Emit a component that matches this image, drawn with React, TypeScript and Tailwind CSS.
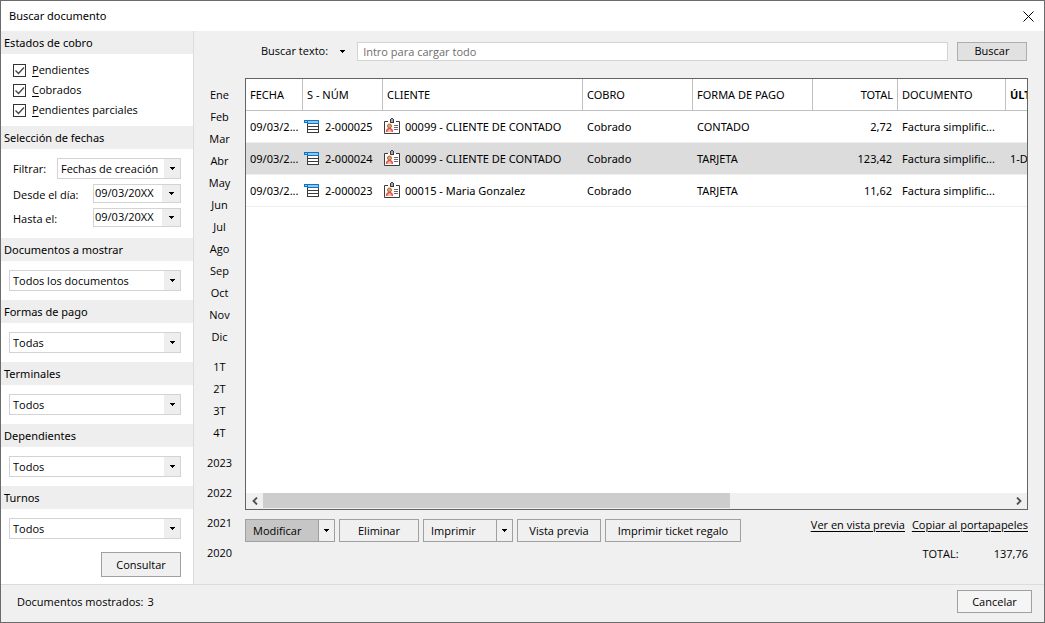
import React, { useState } from 'react';
import clsx from 'clsx';

const MONTHS = ['Ene', 'Feb', 'Mar', 'Abr', 'May', 'Jun', 'Jul', 'Ago', 'Sep', 'Oct', 'Nov', 'Dic'];
const QUARTERS = ['1T', '2T', '3T', '4T'];
const YEARS = ['2023', '2022', '2021', '2020'];

const documents = [
  { date: '09/03/2...', num: '2-000025', client: '00099 - CLIENTE DE CONTADO', status: 'Cobrado', payment: 'CONTADO', total: '2,72', type: 'Factura simplific...', last: '' },
  { date: '09/03/2...', num: '2-000024', client: '00099 - CLIENTE DE CONTADO', status: 'Cobrado', payment: 'TARJETA', total: '123,42', type: 'Factura simplific...', last: '1-D' },
  { date: '09/03/2...', num: '2-000023', client: '00015 - Maria Gonzalez', status: 'Cobrado', payment: 'TARJETA', total: '11,62', type: 'Factura simplific...', last: '' },
];

const filters = [
  { id: 'documentos', title: 'Documentos a mostrar', value: 'Todos los documentos' },
  { id: 'formas', title: 'Formas de pago', value: 'Todas' },
  { id: 'terminales', title: 'Terminales', value: 'Todos' },
  { id: 'dependientes', title: 'Dependientes', value: 'Todos' },
  { id: 'turnos', title: 'Turnos', value: 'Todos' },
];

const Caret = () => (
  <svg width="5" height="3" viewBox="0 0 5 3" shapeRendering="crispEdges" aria-hidden="true">
    <path d="M0 0h5v1H0zM1 1h3v1H1zM2 2h1v1H2z" fill="#000" />
  </svg>
);

const DocIcon = () => (
  <svg width="16" height="16" viewBox="0 0 16 16" className="shrink-0" shapeRendering="crispEdges" aria-hidden="true">
    <path d="M3 5h12v9H3z" fill="#3b3b3b" />
    <path d="M4 5h10v2H4zM4 8h10v2H4zM4 11h10v2H4z" fill="#fff" />
    <path d="M0 1h15v4H3V4H0z" fill="#1173c0" />
    <path d="M1 2h2v1H1zM4 2h10v2H4z" fill="#8cc8f2" />
  </svg>
);

const ClientIcon = () => (
  <svg width="16" height="18" viewBox="0 0 16 18" className="shrink-0" aria-hidden="true">
    <path d="M.5 3.5h15v12H.5z" fill="#fff" stroke="#3b3b3b" />
    <path d="M4 3h8v1H4z" fill="#fff" />
    <path d="M6 1h1V0h2v1h1v4H6z" fill="#3b3b3b" />
    <path d="M7 1h2v3H7z" fill="#a8a8a8" />
    <path d="M2 14v-2l2-2h3l2 2v2z" fill="#e8504a" />
    <path d="M3.5 14v-1.5L5.5 11l2 1.5V14z" fill="#f9b4b0" />
    <circle cx="5.5" cy="8" r="2" fill="#dba578" stroke="#b5652a" />
    <path d="M10 7.5h4M10 9.5h4M10 11.5h4" stroke="#6a6a6a" />
  </svg>
);

const SectionTitle = ({ children }: { children: React.ReactNode }) => (
  <h2 className="flex h-[23px] items-center bg-[#eeeeee] px-[3px] pt-px font-['Noto_Sans','Open_Sans',sans-serif]">{children}</h2>
);

const Check = ({ label }: { label: string }) => (
  <label className="flex h-5 items-center gap-1.5">
    <span className="grid size-[13px]">
      <input type="checkbox" defaultChecked className="peer col-start-1 row-start-1 size-[13px] appearance-none border border-[#333333] bg-white" />
      <svg viewBox="0 0 13 13" className="pointer-events-none invisible col-start-1 row-start-1 size-[13px] peer-checked:visible">
        <path d="M2.5 6.5l3 3 5.5-6" fill="none" stroke="#444" strokeWidth="1.3" />
      </svg>
    </span>
    <span>
      <span className="underline underline-offset-2">{label[0]}</span>
      {label.slice(1)}
    </span>
  </label>
);

const Select = ({ id, value, label, className }: { id: string; value: string; label?: string; className?: string }) => (
  <div className={clsx('relative h-[21px] border border-[#d3d3d3] bg-white', className)}>
    <select id={id} aria-label={label} className="block h-full w-full appearance-none pt-px pr-4 pl-[3px] outline-none">
      <option>{value}</option>
    </select>
    <span className="pointer-events-none absolute inset-y-0 right-0 flex w-4 items-center justify-center bg-[#eeeeee]">
      <Caret />
    </span>
  </div>
);

const DateField = ({ id, label }: { id: string; label: string }) => (
  <div className="flex h-6 items-start justify-between">
    <label htmlFor={id} className="pt-[3px] leading-4">{label}</label>
    <div className="flex h-[19px] w-[88px] border border-[#d3d3d3] bg-white">
      <input id={id} defaultValue="09/03/20XX" className="min-w-0 flex-1 pb-px pl-px outline-none" />
      <button aria-label={'Abrir calendario: ' + label} className="flex w-[18px] items-center justify-center bg-[#eeeeee]">
        <Caret />
      </button>
    </div>
  </div>
);

const ActionButton = ({ children, className }: { children: React.ReactNode; className?: string }) => (
  <button className={clsx('h-[23px] border border-[#a0a0a0] bg-[#f0f0f0]', className)}>{children}</button>
);

const SplitButton = ({ label, active }: { label: string; active?: boolean }) => (
  <div className="flex h-[23px] w-[90px] border border-[#a0a0a0]">
    <button className={clsx('flex-1 border-r border-[#a0a0a0] pl-[7px] text-left', active && 'bg-[#c6c6c6]')}>{label}</button>
    <button aria-label={'Opciones de ' + label} className="flex w-[15px] items-center justify-center">
      <Caret />
    </button>
  </div>
);

const Sidebar = () => (
  <aside className="w-[193px] shrink-0 border-r border-[#dcdcdc] bg-white">
    <SectionTitle>Estados de cobro</SectionTitle>
    <div className="h-[72px] px-3 pt-[6px]">
      <Check label="Pendientes" />
      <Check label="Cobrados" />
      <Check label="Pendientes parciales" />
    </div>
    <SectionTitle>Selección de fechas</SectionTitle>
    <div className="h-[89px] px-3 pt-[9px]">
      <div className="flex h-[26px] items-start justify-between">
        <label htmlFor="filtrar" className="pt-[3px] leading-4">Filtrar:</label>
        <Select id="filtrar" value="Fechas de creación" className="w-[124px]" />
      </div>
      <DateField id="desde" label="Desde el día:" />
      <DateField id="hasta" label="Hasta el:" />
    </div>
    {filters.map((f) => (
      <section key={f.id}>
        <SectionTitle>{f.title}</SectionTitle>
        <div className="py-[9px] pr-3 pl-2">
          <Select id={f.id} value={f.value} label={f.title} />
        </div>
      </section>
    ))}
    <div className="flex justify-end px-3 pt-1 pb-[7px]">
      <button className="h-[25px] w-20 border border-[#a0a0a0] bg-[#f0f0f0]">Consultar</button>
    </div>
  </aside>
);

const Periods = () => (
  <nav className="flex w-[51px] shrink-0 flex-col pt-[53px]">
    {MONTHS.map((m) => (
      <button key={m} className="h-[22px]">{m}</button>
    ))}
    <div className="mt-2 flex flex-col">
      {QUARTERS.map((q) => (
        <button key={q} className="h-[22px]">{q}</button>
      ))}
    </div>
    <div className="mt-1 flex flex-col">
      {YEARS.map((y) => (
        <button key={y} className="h-[30px]">{y}</button>
      ))}
    </div>
  </nav>
);

const Scrollbar = () => (
  <div className="flex h-4 items-center bg-[#f0f0f0]">
    <button aria-label="Desplazar a la izquierda" className="flex w-[17px] justify-center">
      <svg width="6" height="8" viewBox="0 0 6 8"><path d="M5 .5L1.5 4 5 7.5" fill="none" stroke="#505050" strokeWidth="1.8" /></svg>
    </button>
    <div className="h-full flex-1">
      <div className="h-[15px] w-[62.5%] bg-[#cdcdcd]" />
    </div>
    <button aria-label="Desplazar a la derecha" className="flex w-[17px] justify-center">
      <svg width="6" height="8" viewBox="0 0 6 8"><path d="M1 .5L4.5 4 1 7.5" fill="none" stroke="#505050" strokeWidth="1.8" /></svg>
    </button>
  </div>
);

const Results = () => {
  const [selected, setSelected] = useState(1);
  const th = 'border-r border-b border-[#c0c0c0] px-1 text-left font-normal whitespace-nowrap';
  const td = 'border-b border-[#eeeeee] px-1 whitespace-nowrap';

  return (
    <div className="flex flex-1 flex-col border border-[#646464] bg-white">
      <div className="flex-1 overflow-hidden">
        <table className="w-[1250px] table-fixed border-separate border-spacing-0 font-['Noto_Sans','Open_Sans',sans-serif]">
          <colgroup>
            <col className="w-[57px]" />
            <col className="w-[80px]" />
            <col className="w-[200px]" />
            <col className="w-[110px]" />
            <col className="w-[120px]" />
            <col className="w-[85px]" />
            <col className="w-[108px]" />
            <col />
          </colgroup>
          <thead>
            <tr className="h-8">
              <th className={th}>FECHA</th>
              <th className={th}>S - NÚM</th>
              <th className={th}>CLIENTE</th>
              <th className={th}>COBRO</th>
              <th className={th}>FORMA DE PAGO</th>
              <th className={clsx(th, 'text-right!')}>TOTAL</th>
              <th className={th}>DOCUMENTO</th>
              <th className={clsx(th, 'font-bold!')}>ÚLT</th>
            </tr>
          </thead>
          <tbody>
            {documents.map((d, i) => (
              <tr key={d.num} onClick={() => setSelected(i)} className={clsx('h-8', i === selected && 'bg-[#dcdcdc]')}>
                <td className={td}>{d.date}</td>
                <td className={td}>
                  <span className="-ml-[3px] flex items-center gap-[5px]"><DocIcon />{d.num}</span>
                </td>
                <td className={td}>
                  <span className="-ml-[3px] flex items-center gap-[5px]"><ClientIcon />{d.client}</span>
                </td>
                <td className={td}>{d.status}</td>
                <td className={td}>{d.payment}</td>
                <td className={clsx(td, 'pr-1.5! text-right')}>{d.total}</td>
                <td className={td}>{d.type}</td>
                <td className={td}>{d.last}</td>
              </tr>
            ))}
          </tbody>
        </table>
      </div>
      <Scrollbar />
    </div>
  );
};

const App = () => (
  <div className="flex min-h-screen flex-col border border-[#6b6b6b] bg-[#f0f0f0] font-['Open_Sans','Noto_Sans',sans-serif] text-[11px] leading-4 text-black">
    <header className="flex h-[30px] items-center justify-between bg-white pr-2.5 pl-2">
      <h1 className="font-['Noto_Sans','Open_Sans',sans-serif]">Buscar documento</h1>
      <button aria-label="Cerrar">
        <svg width="11" height="11" viewBox="0 0 11 11"><path d="M.5.5l10 10M10.5.5l-10 10" stroke="#000" /></svg>
      </button>
    </header>

    <div className="flex flex-1">
      <Sidebar />
      <Periods />
      <main className="flex min-w-0 flex-1 flex-col pr-4">
        <div className="flex h-[47px] items-center pr-px pb-[7px] pl-4">
          <label htmlFor="buscar">Buscar texto:</label>
          <button aria-label="Opciones de búsqueda" className="flex w-[29px] justify-center">
            <Caret />
          </button>
          <input id="buscar" placeholder="Intro para cargar todo" className="h-[19px] min-w-0 flex-1 border border-[#d3d3d3] bg-white px-[5px] outline-none placeholder:text-[#6e6e6e]" />
          <button className="ml-[9px] h-[19px] w-[70px] border border-[#adadad] bg-[#e1e1e1] leading-4">Buscar</button>
        </div>
        <Results />
        <div className="flex h-[74px] items-start justify-between pt-[7px]">
          <div className="flex gap-1 pt-0.5">
            <SplitButton label="Modificar" active />
            <ActionButton className="w-20">Eliminar</ActionButton>
            <SplitButton label="Imprimir" />
            <ActionButton className="w-[84px]">Vista previa</ActionButton>
            <ActionButton className="w-[136px]">Imprimir ticket regalo</ActionButton>
          </div>
          <div className="flex flex-col items-end gap-[13px] whitespace-nowrap">
            <div className="flex gap-[7px] underline underline-offset-2">
              <a href="#vista">Ver en vista previa</a>
              <a href="#copiar">Copiar al portapapeles</a>
            </div>
            <div className="flex gap-[35px]">
              <span>TOTAL:</span>
              <span>137,76</span>
            </div>
          </div>
        </div>
      </main>
    </div>

    <footer className="flex h-[38px] items-center justify-between border-t border-[#dcdcdc] pr-3 pb-1 pl-4">
      <p className="flex gap-1">
        <span>Documentos mostrados:</span>
        <span>3</span>
      </p>
      <button className="h-[23px] w-[75px] border border-[#a0a0a0] bg-[#f5f5f5]">Cancelar</button>
    </footer>
  </div>
);

export default App;
